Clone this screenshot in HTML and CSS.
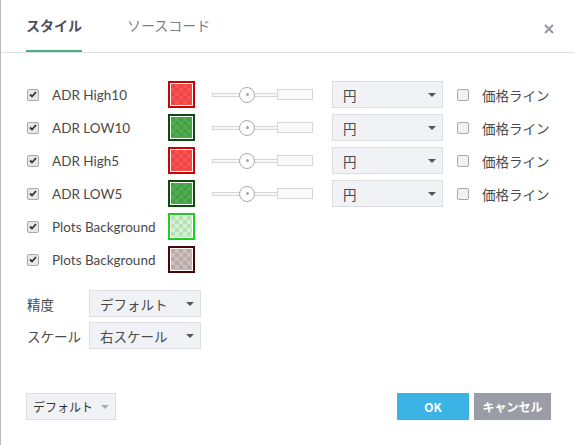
FILE: index.html
```html
<!DOCTYPE html>
<html>
<head>
<meta charset="utf-8">
<link rel="stylesheet" href="styles.css">
</head>
<body>
<div class="dialog">
  <div class="header">
    <div class="tab active">スタイル</div>
    <div class="tab">ソースコード</div>
    <div class="close"><svg width="10" height="10" viewBox="0 0 10 10"><path d="M1 1L9 9M9 1L1 9" stroke="#9598a1" stroke-width="2"/></svg></div>
  </div>
  <div class="content">
    <div class="row">
      <span class="cb checked"><svg width="8" height="7" viewBox="0 0 8 7"><path d="M1 3.5L3 5.5L7 1" stroke="#333" stroke-width="1.8" fill="none"/></svg></span>
      <span class="label">ADR High10</span>
      <span class="swatch red"><span class="fill"></span></span>
      <span class="slider"><span class="track"></span><span class="thumb"><span class="dot"></span></span><span class="box"></span></span>
      <span class="select wide"><span>円</span><span class="caret"></span></span>
      <span class="cb"></span>
      <span class="plabel">価格ライン</span>
    </div>
    <div class="row">
      <span class="cb checked"><svg width="8" height="7" viewBox="0 0 8 7"><path d="M1 3.5L3 5.5L7 1" stroke="#333" stroke-width="1.8" fill="none"/></svg></span>
      <span class="label">ADR LOW10</span>
      <span class="swatch green"><span class="fill"></span></span>
      <span class="slider"><span class="track"></span><span class="thumb"><span class="dot"></span></span><span class="box"></span></span>
      <span class="select wide"><span>円</span><span class="caret"></span></span>
      <span class="cb"></span>
      <span class="plabel">価格ライン</span>
    </div>
    <div class="row">
      <span class="cb checked"><svg width="8" height="7" viewBox="0 0 8 7"><path d="M1 3.5L3 5.5L7 1" stroke="#333" stroke-width="1.8" fill="none"/></svg></span>
      <span class="label">ADR High5</span>
      <span class="swatch red"><span class="fill"></span></span>
      <span class="slider"><span class="track"></span><span class="thumb"><span class="dot"></span></span><span class="box"></span></span>
      <span class="select wide"><span>円</span><span class="caret"></span></span>
      <span class="cb"></span>
      <span class="plabel">価格ライン</span>
    </div>
    <div class="row">
      <span class="cb checked"><svg width="8" height="7" viewBox="0 0 8 7"><path d="M1 3.5L3 5.5L7 1" stroke="#333" stroke-width="1.8" fill="none"/></svg></span>
      <span class="label">ADR LOW5</span>
      <span class="swatch green"><span class="fill"></span></span>
      <span class="slider"><span class="track"></span><span class="thumb"><span class="dot"></span></span><span class="box"></span></span>
      <span class="select wide"><span>円</span><span class="caret"></span></span>
      <span class="cb"></span>
      <span class="plabel">価格ライン</span>
    </div>
    <div class="row">
      <span class="cb checked"><svg width="8" height="7" viewBox="0 0 8 7"><path d="M1 3.5L3 5.5L7 1" stroke="#333" stroke-width="1.8" fill="none"/></svg></span>
      <span class="label">Plots Background</span>
      <span class="swatch lightgreen"><span class="fill"></span></span>
    </div>
    <div class="row">
      <span class="cb checked"><svg width="8" height="7" viewBox="0 0 8 7"><path d="M1 3.5L3 5.5L7 1" stroke="#333" stroke-width="1.8" fill="none"/></svg></span>
      <span class="label">Plots Background</span>
      <span class="swatch brown"><span class="fill"></span></span>
    </div>
  </div>
  <div class="props">
    <div class="prow">
      <span class="plbl">精度</span>
      <span class="select mid"><span>デフォルト</span><span class="caret"></span></span>
    </div>
    <div class="prow">
      <span class="plbl">スケール</span>
      <span class="select mid"><span>右スケール</span><span class="caret"></span></span>
    </div>
  </div>
  <div class="footer">
    <span class="defbtn">デフォルト<span class="caret light"></span></span>
    <span class="spacer"></span>
    <span class="btn ok">OK</span>
    <span class="btn cancel">キャンセル</span>
  </div>
</div>
</body>
</html>
```

FILE: styles.css
```css
* { box-sizing: border-box; }
html, body { margin: 0; padding: 0; background: #fff; }
body {
  font-family: Lato, "Noto Sans CJK JP", sans-serif;
  color: #4a4a4a;
}
.dialog {
  width: 575px;
  height: 445px;
  border-left: 1px solid #b9b9b9;
  display: flex;
  flex-direction: column;
}
.header {
  height: 53px;
  border-bottom: 1px solid #dfe1e5;
  display: flex;
  align-items: stretch;
  padding-left: 25px;
  padding-right: 21px;
}
.tab {
  font-family: "Noto Sans CJK JP", sans-serif;
  font-size: 14px;
  line-height: 20px;
  color: #7b7f88;
  padding-top: 15px;
  margin-right: 45px;
  border-bottom: 2px solid transparent;
}
.tab.active {
  font-weight: bold;
  color: #4b4f5b;
  border-bottom-color: #4caf7d;
}
.close {
  margin-left: auto;
  padding-top: 18px;
}
.content {
  padding: 28px 0 0 26px;
  display: flex;
  flex-direction: column;
  gap: 6px;
}
.row {
  display: flex;
  align-items: center;
  height: 27px;
}
.cb {
  width: 12px;
  height: 12px;
  border: 1px solid #a9a9a9;
  border-radius: 2px;
  background: #f1f1f1;
  display: flex;
  align-items: center;
  justify-content: center;
  flex: none;
}
.cb.checked { background: #e8e8e8; }
.label {
  font-size: 13.5px;
  margin-left: 13px;
  width: 116px;
  color: #4a4a4a;
}
.swatch {
  width: 27px;
  height: 27px;
  border: 2px solid;
  padding: 1px;
  background: #fff;
  flex: none;
}
.swatch .fill {
  display: block;
  width: 100%;
  height: 100%;
  background-size: 8px 8px;
}
.swatch.red { border-color: #cc0000; }
.swatch.red .fill { background-image: conic-gradient(#f75151 25%, #ec4545 0 50%, #f75151 0 75%, #ec4545 0); }
.swatch.green { border-color: #0b4b0b; }
.swatch.green .fill { background-image: conic-gradient(#50ad50 25%, #449e44 0 50%, #50ad50 0 75%, #449e44 0); }
.swatch.lightgreen { border-color: #1fcc1f; }
.swatch.lightgreen .fill { background-image: conic-gradient(#d3f0d3 25%, #b7e2b7 0 50%, #d3f0d3 0 75%, #b7e2b7 0); }
.swatch.brown { border-color: #4a0505; }
.swatch.brown .fill { background-image: conic-gradient(#cfc0c0 25%, #b9a9a9 0 50%, #cfc0c0 0 75%, #b9a9a9 0); }
.slider {
  margin-left: 17px;
  width: 101px;
  height: 18px;
  position: relative;
  display: flex;
  align-items: center;
}
.slider .track {
  display: block;
  width: 66px;
  height: 4px;
  border: 1px solid #d4d6da;
  border-right: none;
  background: #f7f7f7;
}
.slider .box {
  display: block;
  width: 36px;
  height: 11px;
  border: 1px solid #d4d6da;
  background: #f9f9f9;
}
.slider .thumb {
  position: absolute;
  left: 27px;
  top: 1px;
  width: 16px;
  height: 16px;
  border: 1px solid #a8abb3;
  border-radius: 50%;
  background: #fff;
  display: flex;
  align-items: center;
  justify-content: center;
}
.slider .dot {
  width: 3px;
  height: 3px;
  border-radius: 50%;
  background: #a0a3aa;
}
.select {
  height: 27px;
  background: #f1f2f6;
  border: 1px solid #dcdee3;
  display: flex;
  align-items: center;
  justify-content: space-between;
  font-family: "Noto Sans CJK JP", sans-serif;
  font-size: 13.5px;
  color: #4a4a4a;
  padding: 0 6px 0 10px;
  flex: none;
}
.select.wide { width: 111px; margin-left: 19px; }
.select.mid { width: 112px; }
.caret {
  width: 0;
  height: 0;
  border-left: 4px solid transparent;
  border-right: 4px solid transparent;
  border-top: 4px solid #555;
}
.caret.light { border-top-color: #a8abb3; margin-left: 8px; }
.row .cb:not(.checked) { margin-left: 14px; }
.plabel {
  margin-left: 13px;
  font-family: "Noto Sans CJK JP", sans-serif;
  font-size: 13.5px;
  color: #4a4a4a;
}
.props {
  padding: 17px 0 0 26px;
  display: flex;
  flex-direction: column;
  gap: 5px;
}
.prow {
  display: flex;
  align-items: center;
  height: 27px;
}
.plbl {
  width: 62px;
  font-family: "Noto Sans CJK JP", sans-serif;
  font-size: 13.5px;
}
.footer {
  margin-top: 44px;
  padding: 0 24px 0 25px;
  display: flex;
  align-items: center;
  height: 27px;
}
.defbtn {
  height: 27px;
  width: 90px;
  background: #f1f2f6;
  border: 1px solid #dcdee3;
  display: flex;
  align-items: center;
  justify-content: center;
  font-family: "Noto Sans CJK JP", sans-serif;
  font-size: 12px;
  color: #333;
}
.spacer { flex: 1; }
.btn {
  height: 27px;
  display: flex;
  align-items: center;
  justify-content: center;
  color: #fff;
  font-weight: bold;
  font-size: 12px;
  font-family: "Noto Sans CJK JP", sans-serif;
}
.btn.ok { width: 72px; background: #3bb3e4; margin-right: 5px; }
.btn.cancel { width: 77px; background: #9b9da6; }
```
